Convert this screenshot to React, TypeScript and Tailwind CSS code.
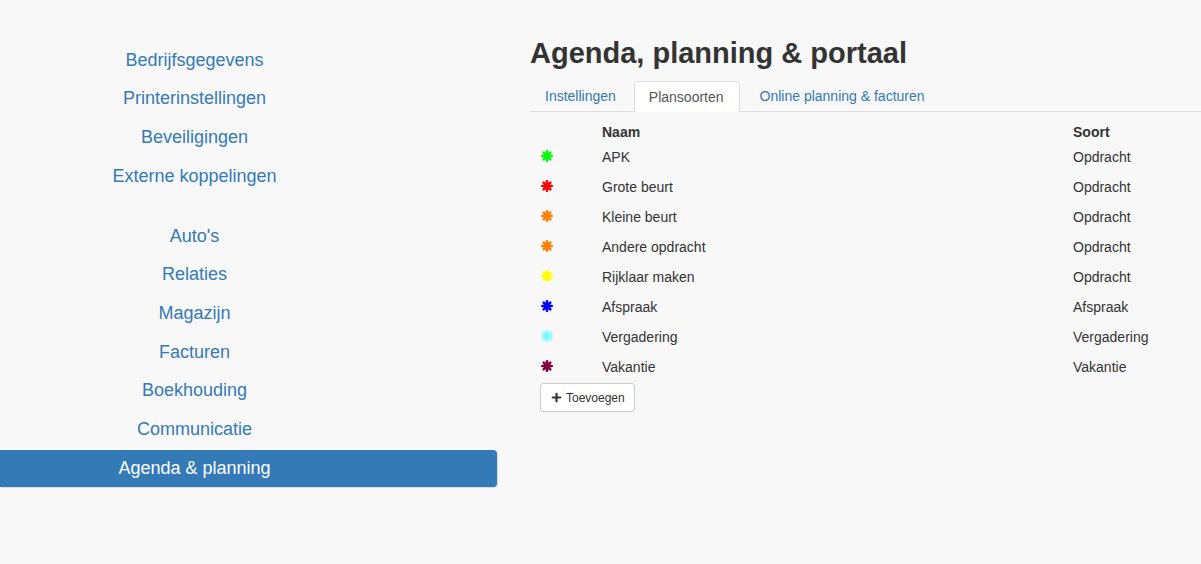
import { Plus } from "lucide-react";

// Sidebar navigation, split in two groups
const topLinks = ["Bedrijfsgegevens", "Printerinstellingen", "Beveiligingen", "Externe koppelingen"];
const mainLinks = ["Auto's", "Relaties", "Magazijn", "Facturen", "Boekhouding", "Communicatie", "Agenda & planning"];

const planTypes = [
  { name: "APK", color: "#00ff00", soort: "Opdracht" },
  { name: "Grote beurt", color: "#ff0000", soort: "Opdracht" },
  { name: "Kleine beurt", color: "#ff8000", soort: "Opdracht" },
  { name: "Andere opdracht", color: "#ff8000", soort: "Opdracht" },
  { name: "Rijklaar maken", color: "#ffff00", soort: "Opdracht" },
  { name: "Afspraak", color: "#0000ff", soort: "Afspraak" },
  { name: "Vergadering", color: "#80ffff", soort: "Vergadering" },
  { name: "Vakantie", color: "#800040", soort: "Vakantie" },
];

const Asterisk = ({ color }: { color: string }) => (
  <svg width="12" height="12" viewBox="0 0 12 12" className="block -translate-y-[1px]">
    <g stroke={color} strokeWidth="2.6" strokeLinecap="round">
      <line x1="6" y1="1.3" x2="6" y2="10.7" />
      <line x1="1.3" y1="6" x2="10.7" y2="6" />
      <line x1="2.7" y1="2.7" x2="9.3" y2="9.3" />
      <line x1="9.3" y1="2.7" x2="2.7" y2="9.3" />
    </g>
    <circle cx="6" cy="6" r="3" fill={color} />
  </svg>
);

const NavLink = ({ label, active }: { label: string; active?: boolean }) => (
  <a
    href="#"
    className={
      active
        ? "flex h-[37px] w-[497px] items-center justify-center rounded-r-[4px] bg-[#337ab7] pr-[108px] text-[18px] text-white shadow-[1px_1px_0_#dcdcdc]"
        : "flex h-[37px] w-[497px] items-center justify-center pr-[108px] text-[18px] text-[#337ab7]"
    }
  >
    {label}
  </a>
);

export default function App() {
  return (
    <div className="flex h-[564px] w-[1201px] overflow-hidden bg-[#f8f8f8] font-['Liberation_Sans',Arial,sans-serif] text-[#333]">
      {/* Sidebar */}
      <nav className="flex w-[530px] shrink-0 flex-col pt-[41.7px]">
        <div className="flex flex-col gap-[1.67px]">
          {topLinks.map((l) => (
            <NavLink key={l} label={l} />
          ))}
        </div>
        <div className="mt-[23px] flex flex-col gap-[1.67px]">
          {mainLinks.map((l) => (
            <NavLink key={l} label={l} active={l === "Agenda & planning"} />
          ))}
        </div>
      </nav>

      {/* Content */}
      <main className="flex flex-1 flex-col pt-[35px]">
        <h1 className="h-[36px] text-[29px] font-bold leading-[36px] text-[#333]">
          Agenda, planning &amp; portaal
        </h1>
        <ul className="mt-[10px] flex h-[31px] border-b border-[#ddd] text-[14px]">
          <li className="mr-[2px]">
            <a href="#" className="flex h-[31px] items-center border border-transparent pl-[14px] pr-[15px] text-[#337ab7]">
              Instellingen
            </a>
          </li>
          <li className="mr-[2px]">
            <a href="#" className="flex h-[31px] items-center rounded-t-[4px] border border-b-0 border-[#ddd] bg-white pl-[14px] pr-[15px] text-[#555]">
              Plansoorten
            </a>
          </li>
          <li>
            <a href="#" className="flex h-[31px] items-center border border-transparent pl-[17px] pr-[15px] text-[#337ab7]">
              Online planning &amp; facturen
            </a>
          </li>
        </ul>

        <table className="mt-[11px] w-full border-collapse text-[14px]">
          <thead>
            <tr className="h-[19px] text-left font-bold leading-[19px]">
              <th className="w-[72px]"></th>
              <th className="font-bold">Naam</th>
              <th className="w-[128px] font-bold">Soort</th>
            </tr>
          </thead>
          <tbody>
            {planTypes.map((p) => (
              <tr key={p.name} className="h-[30px] leading-[20px]">
                <td className="pl-[11px]">
                  <Asterisk color={p.color} />
                </td>
                <td>{p.name}</td>
                <td>{p.soort}</td>
              </tr>
            ))}
          </tbody>
        </table>

        <div className="mt-[1px] pl-[10px]">
          <button className="flex h-[29px] items-center gap-[3px] rounded-[3px] border border-[#ccc] bg-white px-[9px] text-[12px] text-[#333]">
            <Plus size={13} strokeWidth={4} />
            Toevoegen
          </button>
        </div>
      </main>
    </div>
  );
}
